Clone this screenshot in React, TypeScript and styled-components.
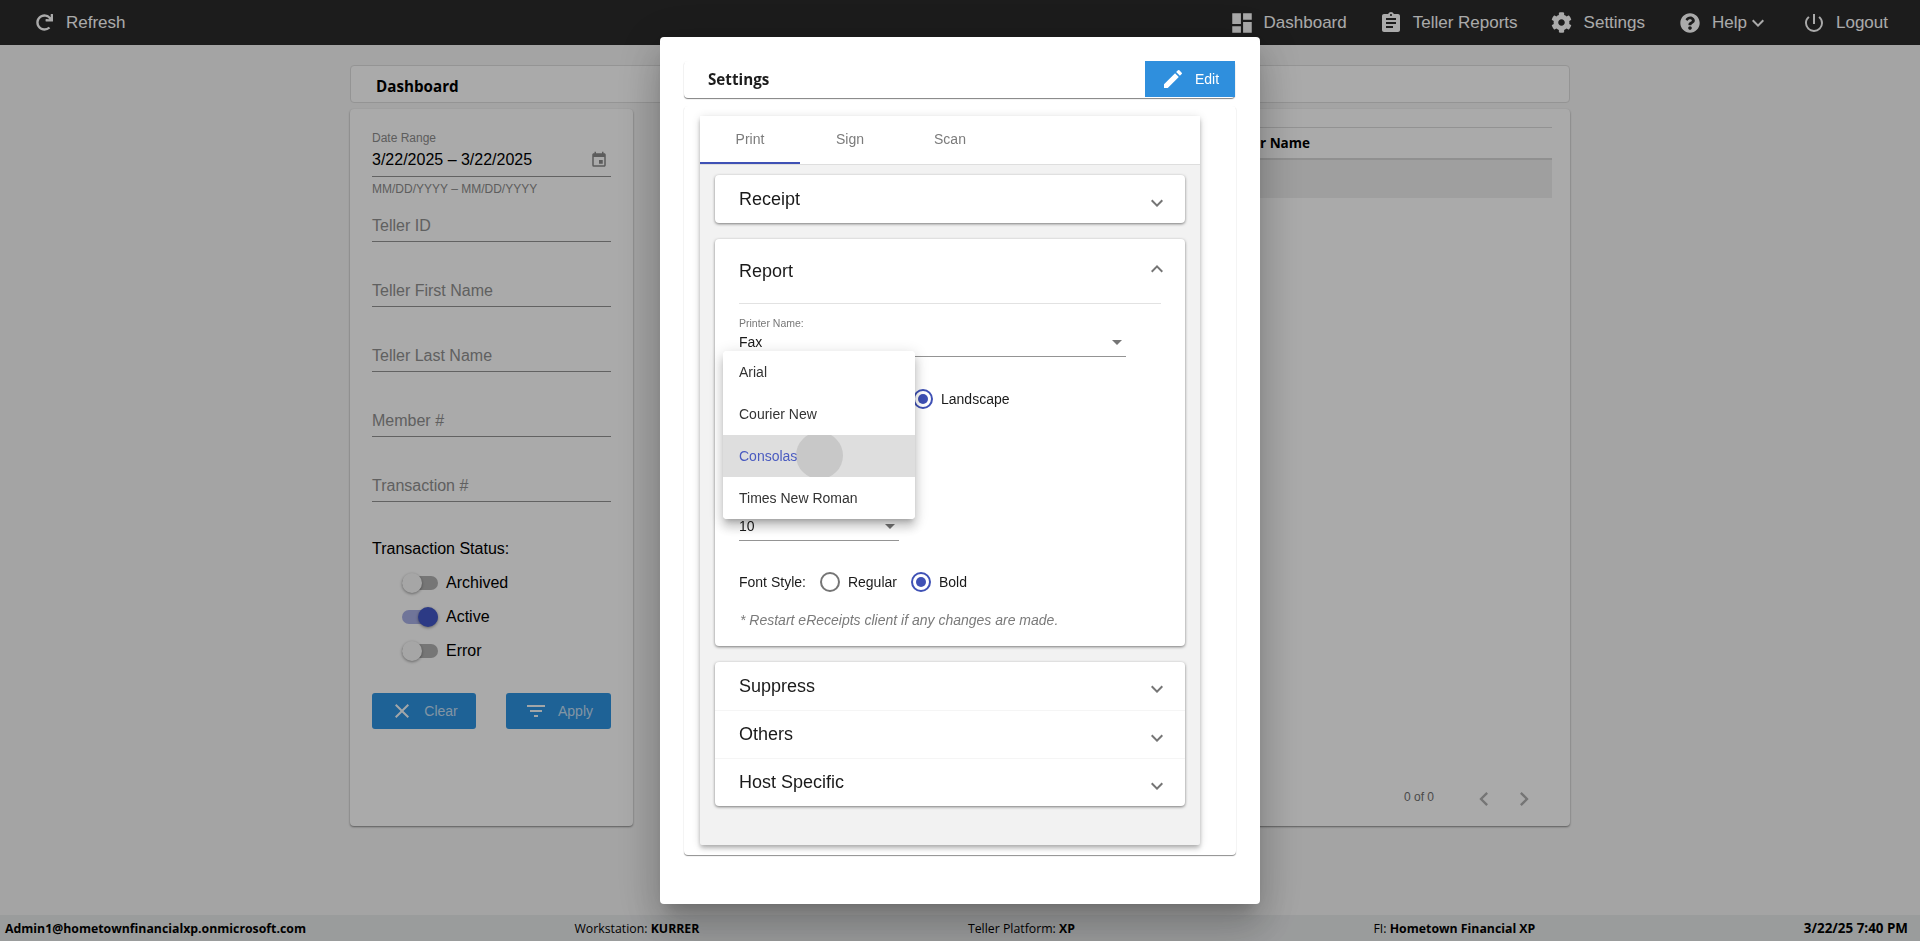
import React from "react";
import styled, { createGlobalStyle } from "styled-components";
import {
  MdDashboard, MdAssignment, MdExpandMore, MdExpandLess,
  MdPowerSettingsNew, MdEdit, MdClose, MdFilterList, MdEvent, MdArrowDropDown, MdChevronLeft, MdChevronRight,
} from "react-icons/md";
import { FaCog, FaQuestionCircle, FaRedo } from "react-icons/fa";

const Global = createGlobalStyle`
  html, body { margin: 0; padding: 0; height: 100%; overflow: hidden; }
  body { font-family: "Liberation Sans", Arial, sans-serif; background: #f6f6f6; color: #000; }
  * { box-sizing: border-box; }
`;

const Page = styled.div`
  height: 941px;
  display: flex;
  flex-direction: column;
`;
const AppBar = styled.header`
  height: 45px;
  flex: none;
  background: #2a2a2a;
  color: #fff;
  display: flex;
  align-items: center;
  padding: 0 32px 0 32px;
  font-size: 17px;
`;
const BarItem = styled.div<{ $ml?: number; $gap?: number }>`
  display: flex;
  align-items: center;
  gap: ${(p) => p.$gap ?? 10}px;
  margin-left: ${(p) => p.$ml ?? 0}px;
  white-space: nowrap;
  svg { flex: none; }
`;
const HelpCaret = styled(MdExpandMore)`
  margin-left: -13px;
`;
const BarSpacer = styled.div`flex: 1;`;
const Content = styled.main`
  flex: 1;
  width: 1220px;
  margin: 0 auto;
  padding-top: 20px;
  display: flex;
  flex-direction: column;
`;
const TitleCard = styled.div`
  height: 38px;
  background: #fff;
  border: 1px solid #dfdfdf;
  border-radius: 4px;
  display: flex;
  align-items: center;
  padding-left: 25px;
  padding-top: 3px;
  font-family: "Open Sans", sans-serif;
  font-weight: 700;
  font-size: 15.2px;
`;
const Columns = styled.div`
  display: flex;
  gap: 30px;
  margin-top: 6px;
  height: 717px;
`;
const Panel = styled.section`
  background: #fff;
  border-radius: 4px;
  box-shadow: 0 1px 2px rgba(0, 0, 0, 0.45);
`;
const FilterPanel = styled(Panel)`
  width: 283px;
  flex: none;
  padding: 22px;
`;
const TablePanel = styled(Panel)`
  flex: 1;
  padding: 18px 18px 0;
  display: flex;
  flex-direction: column;
`;
const DateLabel = styled.div`
  font-size: 12px;
  line-height: 14px;
  color: #8c8c8c;
`;
const DateValue = styled.div`
  height: 32px;
  display: flex;
  align-items: center;
  justify-content: space-between;
  font-size: 16px;
  border-bottom: 1px solid #949494;
  padding-right: 3px;
  padding-bottom: 1px;
  color: #000;
  svg { color: #8a8a8a; }
`;
const DateHelp = styled.div`
  font-size: 12px;
  line-height: 17px;
  margin-top: 4px;
  color: #8c8c8c;
`;
const TextField = styled.div<{ $mt: number }>`
  height: 33px;
  margin-top: ${(p) => p.$mt}px;
  border-bottom: 1px solid #949494;
  font-size: 16px;
  color: #909090;
  padding-top: 8px;
`;
const StatusTitle = styled.div`
  margin-top: 37px;
  font-size: 16px;
  line-height: 20px;
`;
const Toggles = styled.div`
  margin-top: 7px;
  padding-left: 30px;
  display: flex;
  flex-direction: column;
`;
const ToggleRow = styled.div`
  height: 34px;
  display: flex;
  align-items: center;
  font-size: 16px;
  gap: 8px;
  padding-bottom: 1px;
`;
const Switch = styled.span<{ $on?: boolean }>`
  position: relative;
  width: 36px;
  height: 14px;
  border-radius: 7px;
  background: ${(p) => (p.$on ? "#a9b0e6" : "#b2b2b2")};
  &::after {
    content: "";
    position: absolute;
    top: -3px;
    left: ${(p) => (p.$on ? "16px" : "0")};
    width: 20px;
    height: 20px;
    border-radius: 50%;
    background: ${(p) => (p.$on ? "#4358c8" : "#fafafa")};
    box-shadow: 0 1px 3px rgba(0, 0, 0, 0.4);
  }
`;
const Actions = styled.div`
  margin-top: 25px;
  display: flex;
  justify-content: space-between;
`;
const ActionButton = styled.button<{ $w: number }>`
  width: ${(p) => p.$w}px;
  height: 36px;
  border: 0;
  border-radius: 3px;
  background: #2e93e1;
  color: rgba(255, 255, 255, 0.72);
  font: 14px "Liberation Sans", Arial, sans-serif;
  display: flex;
  align-items: center;
  justify-content: center;
  gap: 10px;
  padding: 0;
  svg { color: #fff; opacity: 0.95; }
`;
const TableHead = styled.div`
  height: 33px;
  border-top: 1px solid #dcdcdc;
  border-bottom: 2px solid #d9d9d9;
  font-family: "Open Sans", sans-serif;
  font-weight: 700;
  font-size: 13.5px;
  display: flex;
  align-items: center;
  padding-left: 547px;
`;
const TableRow = styled.div`
  height: 38px;
  background: #efefef;
`;
const Pager = styled.div`
  margin-top: auto;
  margin-bottom: 13px;
  display: flex;
  align-items: center;
  justify-content: flex-end;
  font-size: 12px;
  color: #707070;
  padding-right: 14px;
  span { margin-right: 36px; margin-top: -4px; }
  svg { color: #b0b0b0; }
  svg + svg { margin-left: 12px; }
`;
const Footer = styled.footer`
  height: 26px;
  flex: none;
  background: #e8eaeb;
  display: flex;
  align-items: center;
  justify-content: space-between;
  padding: 0 12px 0 5px;
  font-family: "Open Sans", sans-serif;
  font-size: 12.3px;
  white-space: nowrap;
  b { font-weight: 700; }
`;
const PlatformItem = styled.span`
  margin-right: 30px;
`;
const Stamp = styled.b`
  font-size: 13.4px;
`;
const Backdrop = styled.div`
  position: fixed;
  inset: 0;
  background: rgba(0, 0, 0, 0.333);
  display: flex;
  align-items: center;
  justify-content: center;
`;
const Modal = styled.div`
  width: 600px;
  height: 867px;
  background: #fff;
  border-radius: 4px;
  padding: 24px 24px 0;
  box-shadow: 0 11px 15px -7px rgba(0, 0, 0, 0.2), 0 24px 38px 3px rgba(0, 0, 0, 0.14), 0 9px 46px 8px rgba(0, 0, 0, 0.12);
`;
const ModalHead = styled.div`
  height: 37px;
  width: 551px;
  display: flex;
  align-items: center;
  justify-content: space-between;
  border-radius: 4px;
  box-shadow: 0 1px 1px rgba(0, 0, 0, 0.5);
  font-family: "Open Sans", sans-serif;
  font-weight: 700;
  font-size: 15.2px;
  color: #1c1c1c;
  padding: 0 0 2px 24px;
`;
const EditButton = styled.button`
  width: 90px;
  height: 36px;
  align-self: flex-start;
  border: 0;
  background: #2f8fdd;
  color: #fff;
  font: 14px "Liberation Sans", Arial, sans-serif;
  display: flex;
  align-items: center;
  justify-content: flex-start;
  padding: 0 0 0 16px;
  gap: 10px;
`;
const ModalBody = styled.div`
  margin-top: 8px;
  width: 552px;
  height: 749px;
  border-radius: 4px;
  padding: 10px 36px 10px 16px;
  box-shadow: 0 1px 1px rgba(0, 0, 0, 0.45);
`;
const TabsPaper = styled.div`
  height: 100%;
  background: #f2f2f2;
  box-shadow: 0 2px 4px -1px rgba(0, 0, 0, 0.2), 0 4px 5px 0 rgba(0, 0, 0, 0.14), 0 1px 10px 0 rgba(0, 0, 0, 0.12);
  border-radius: 2px;
`;
const TabBar = styled.div`
  height: 49px;
  background: #fff;
  display: flex;
  border-bottom: 1px solid #dedede;
`;
const Tab = styled.div<{ $active?: boolean }>`
  width: 100px;
  height: 48px;
  display: flex;
  align-items: center;
  justify-content: center;
  font-size: 14px;
  color: #7b7b7b;
  border-bottom: 2px solid ${(p) => (p.$active ? "#3f51b5" : "transparent")};
`;
const Sections = styled.div`
  padding: 10px 15px 0;
`;
const Card = styled.div<{ $mt?: number }>`
  position: relative;
  margin-top: ${(p) => p.$mt ?? 0}px;
  background: #fff;
  border-radius: 4px;
  box-shadow: 0 1px 3px rgba(0, 0, 0, 0.5);
`;
const SectionHead = styled.div<{ $h?: number; $line?: boolean }>`
  height: ${(p) => p.$h ?? 48}px;
  display: flex;
  align-items: center;
  justify-content: space-between;
  padding: 0 16px 0 24px;
  font-size: 18px;
  color: #1a1a1a;
  border-top: ${(p) => (p.$line ? "1px solid #f5f5f5" : "0")};
`;
const Chevron = styled.span<{ $dy: number }>`
  display: flex;
  color: #757575;
  transform: translateY(${(p) => p.$dy}px);
`;
const ReportBody = styled.div`
  position: relative;
  height: 343px;
  margin: 0 24px;
  border-top: 1px solid #e2e2e2;
`;
const SmallLabel = styled.div`
  margin-top: 13px;
  font-size: 10.5px;
  line-height: 12px;
  color: #777;
`;
const SelectBox = styled.div<{ $w: number; $mt?: number }>`
  width: ${(p) => p.$w}px;
  height: 27px;
  margin-top: ${(p) => p.$mt ?? 0}px;
  display: flex;
  align-items: center;
  justify-content: space-between;
  border-bottom: 1px solid #949494;
  font-size: 14px;
  color: #1a1a1a;
  padding-bottom: 2px;
  svg { color: #757575; margin-right: -3px; }
`;
const Radio = styled.span<{ $on?: boolean }>`
  width: 20px;
  height: 20px;
  flex: none;
  border-radius: 50%;
  border: 2px solid ${(p) => (p.$on ? "#3f51b5" : "#757575")};
  display: flex;
  align-items: center;
  justify-content: center;
  &::after {
    content: "";
    width: 10px;
    height: 10px;
    border-radius: 50%;
    background: ${(p) => (p.$on ? "#3f51b5" : "transparent")};
  }
`;
const OptionRow = styled.div<{ $mt: number; $pl?: number }>`
  height: 20px;
  margin-top: ${(p) => p.$mt}px;
  padding-left: ${(p) => p.$pl ?? 0}px;
  display: flex;
  align-items: center;
  font-size: 14px;
  color: #1a1a1a;
`;
const OptionText = styled.span<{ $ml: number }>`
  margin-left: ${(p) => p.$ml}px;
`;
const Note = styled.div`
  margin-top: 20px;
  font-size: 14px;
  line-height: 16px;
  font-style: italic;
  color: #7a7a7a;
  padding-left: 1px;
`;
const Menu = styled.ul`
  position: absolute;
  top: 47px;
  left: -16px;
  width: 192px;
  margin: 0;
  padding: 0;
  list-style: none;
  background: #fff;
  border-radius: 4px;
  overflow: hidden;
  box-shadow: 0 5px 5px -3px rgba(0, 0, 0, 0.2), 0 8px 10px 1px rgba(0, 0, 0, 0.14), 0 3px 14px 2px rgba(0, 0, 0, 0.12);
`;
const MenuItem = styled.li<{ $active?: boolean }>`
  position: relative;
  height: 42px;
  display: flex;
  align-items: center;
  padding-left: 16px;
  font-size: 14px;
  overflow: hidden;
  color: ${(p) => (p.$active ? "#4a5bc0" : "#333")};
  background: ${(p) => (p.$active ? "#dedede" : "#fff")};
`;
const Ripple = styled.span`
  position: absolute;
  left: 73px;
  top: -3px;
  width: 47px;
  height: 47px;
  border-radius: 50%;
  background: #c8c8c8;
`;
const MenuLabel = styled.span`
  position: relative;
`;

export default function App() {
  return (
    <>
      <Global />
      <Page>
        <AppBar>
          <BarItem $ml={4} $gap={13}><FaRedo size={17} />Refresh</BarItem>
          <BarSpacer />
          <BarItem $gap={9}><MdDashboard size={26} />Dashboard</BarItem>
          <BarItem $ml={32}><MdAssignment size={24} />Teller Reports</BarItem>
          <BarItem $ml={33} $gap={12}><FaCog size={21} />Settings</BarItem>
          <BarItem $ml={35} $gap={12}>
            <FaQuestionCircle size={20} />
            <span>Help</span>
            <HelpCaret size={24} />
          </BarItem>
          <BarItem $ml={32}><MdPowerSettingsNew size={24} />Logout</BarItem>
        </AppBar>
        <Content>
          <TitleCard>Dashboard</TitleCard>
          <Columns>
            <FilterPanel>
              <DateLabel>Date Range</DateLabel>
              <DateValue>3/22/2025 – 3/22/2025<MdEvent size={18} /></DateValue>
              <DateHelp>MM/DD/YYYY – MM/DD/YYYY</DateHelp>
              <TextField $mt={11}>Teller ID</TextField>
              <TextField $mt={32}>Teller First Name</TextField>
              <TextField $mt={32}>Teller Last Name</TextField>
              <TextField $mt={32}>Member #</TextField>
              <TextField $mt={32}>Transaction #</TextField>
              <StatusTitle>Transaction Status:</StatusTitle>
              <Toggles>
                <ToggleRow><Switch />Archived</ToggleRow>
                <ToggleRow><Switch $on />Active</ToggleRow>
                <ToggleRow><Switch />Error</ToggleRow>
              </Toggles>
              <Actions>
                <ActionButton $w={104}><MdClose size={24} />Clear</ActionButton>
                <ActionButton $w={105}><MdFilterList size={24} />Apply</ActionButton>
              </Actions>
            </FilterPanel>
            <TablePanel>
              <TableHead>Teller Name</TableHead>
              <TableRow />
              <Pager>
                <span>0 of 0</span>
                <MdChevronLeft size={28} />
                <MdChevronRight size={28} />
              </Pager>
            </TablePanel>
          </Columns>
        </Content>
        <Footer>
          <b>Admin1@hometownfinancialxp.onmicrosoft.com</b>
          <span>Workstation: <b>KURRER</b></span>
          <PlatformItem>Teller Platform: <b>XP</b></PlatformItem>
          <span>FI: <b>Hometown Financial XP</b></span>
          <Stamp>3/22/25 7:40 PM</Stamp>
        </Footer>
      </Page>
      <Backdrop>
        <Modal>
          <ModalHead>
            Settings
            <EditButton><MdEdit size={24} />Edit</EditButton>
          </ModalHead>
          <ModalBody>
            <TabsPaper>
              <TabBar>
                <Tab $active>Print</Tab>
                <Tab>Sign</Tab>
                <Tab>Scan</Tab>
              </TabBar>
              <Sections>
                <Card>
                  <SectionHead>Receipt<Chevron $dy={4}><MdExpandMore size={24} /></Chevron></SectionHead>
                </Card>
                <Card $mt={16}>
                  <SectionHead $h={64}>Report<Chevron $dy={-2}><MdExpandLess size={24} /></Chevron></SectionHead>
                  <ReportBody>
                    <SmallLabel>Printer Name:</SmallLabel>
                    <SelectBox $w={387} $mt={1}>Fax<MdArrowDropDown size={24} /></SelectBox>
                    <OptionRow $mt={32} $pl={174}>
                      <Radio $on /><OptionText $ml={8}>Landscape</OptionText>
                    </OptionRow>
                    <SelectBox $w={160} $mt={105}>10<MdArrowDropDown size={24} /></SelectBox>
                    <OptionRow $mt={31}>
                      Font Style:
                      <OptionText $ml={14}><Radio /></OptionText>
                      <OptionText $ml={8}>Regular</OptionText>
                      <OptionText $ml={14}><Radio $on /></OptionText>
                      <OptionText $ml={8}>Bold</OptionText>
                    </OptionRow>
                    <Note>* Restart eReceipts client if any changes are made.</Note>
                    <Menu>
                      <MenuItem>Arial</MenuItem>
                      <MenuItem>Courier New</MenuItem>
                      <MenuItem $active><Ripple /><MenuLabel>Consolas</MenuLabel></MenuItem>
                      <MenuItem>Times New Roman</MenuItem>
                    </Menu>
                  </ReportBody>
                </Card>
                <Card $mt={16}>
                  <SectionHead>Suppress<Chevron $dy={3}><MdExpandMore size={24} /></Chevron></SectionHead>
                  <SectionHead $line>Others<Chevron $dy={3}><MdExpandMore size={24} /></Chevron></SectionHead>
                  <SectionHead $line>Host Specific<Chevron $dy={3}><MdExpandMore size={24} /></Chevron></SectionHead>
                </Card>
              </Sections>
            </TabsPaper>
          </ModalBody>
        </Modal>
      </Backdrop>
    </>
  );
}
